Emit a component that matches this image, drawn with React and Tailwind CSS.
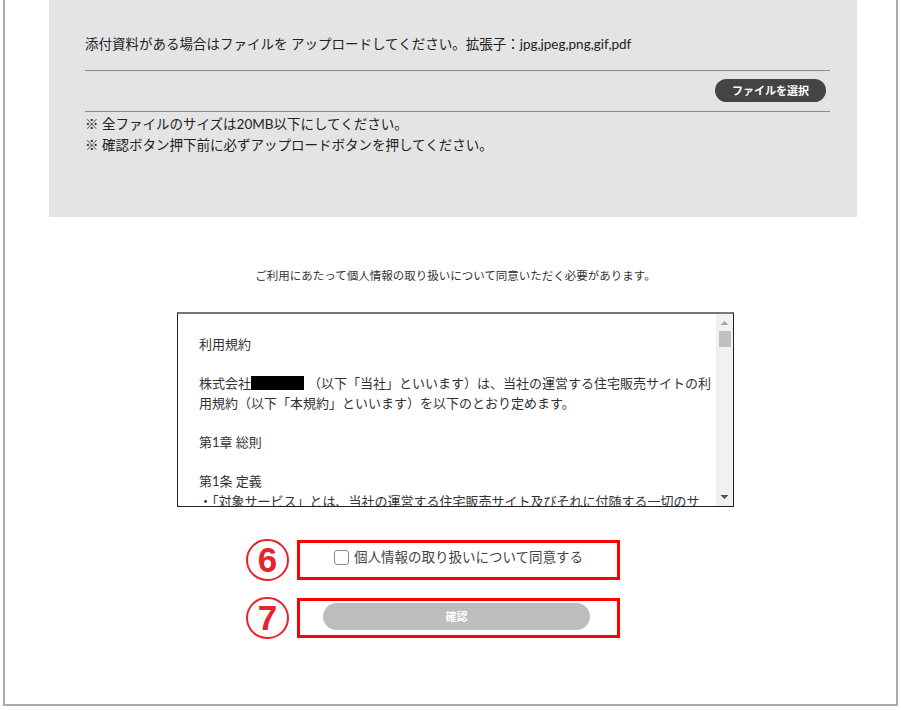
import React, { useState } from "react";

const FONT = { fontFamily: 'Lato, "Noto Sans CJK JP", sans-serif' };

const CircleNum = ({ n }) => (
  <div className="w-[43px] h-[42px] shrink-0 rounded-full border-2 border-[#e8232b] flex items-center justify-center">
    <span className="text-[#e8232b] text-[35px] leading-none font-bold font-['Liberation_Sans',Arial,sans-serif] -mt-[1px]">
      {n}
    </span>
  </div>
);

const FakeScrollbar = () => (
  <div className="w-[17px] shrink-0 bg-[#f1f1f1] flex flex-col items-center">
    <svg width="9" height="6" viewBox="0 0 9 6" className="mt-[6px]">
      <path d="M0.5 5 L4.5 1 L8.5 5 Z" fill="#a3a3a3" />
    </svg>
    <div className="mt-[5px] w-[12px] h-[16px] bg-[#c1c1c1]" />
    <div className="flex-1" />
    <svg width="9" height="6" viewBox="0 0 9 6" className="mb-[6px]">
      <path d="M0.5 1 L4.5 5 L8.5 1 Z" fill="#505050" />
    </svg>
  </div>
);

const TermsBox = () => (
  <div className="mt-[28px] h-[195px] flex border border-[#222] border-t-2 border-t-[#777] bg-white">
    <div className="flex-1 overflow-hidden pl-[21px] pt-[20px] text-[13px] leading-[20px] text-[#333] whitespace-nowrap">
      <p className="mb-[19px]">利用規約</p>
      <p className="mb-[19px]">
        <span className="block">
          株式会社
          <span className="inline-block w-[53px] h-[14px] bg-black align-[-2px]" />
          <span className="inline-block w-[4px]" />（以下「当社」といいます）は、当社の運営する住宅販売サイトの利
        </span>
        <span className="block">用規約（以下「本規約」といいます）を以下のとおり定めます。</span>
      </p>
      <p className="mb-[19px]">第1章 総則</p>
      <p>第1条 定義</p>
      <p>・「対象サービス」とは、当社の運営する住宅販売サイト及びそれに付随する一切のサ</p>
    </div>
    <FakeScrollbar />
  </div>
);

const App = () => {
  const [agreed, setAgreed] = useState(false);

  return (
    <div className="h-[710px] bg-white px-[3px] text-[#222]" style={FONT}>
      <div className="h-[706px] border-x-2 border-b-2 border-[#aaa]">
        {/* upload panel */}
        <div className="ml-[44px] mr-[39px] h-[217px] bg-[#e4e4e4] pl-[36px] pr-[27px] pt-[34px] text-[13.5px]">
          <p className="leading-[21px]">
            添付資料がある場合はファイルを アップロードしてください。拡張子：jpg,jpeg,png,gif,pdf
          </p>
          <div className="mt-[15px] border-t border-[#8c8c8c]" />
          <div className="flex justify-end pr-[4px] pt-[8px] pb-[9px]">
            <button className="h-[23px] px-[17px] rounded-full bg-[#444] text-white text-[11px] font-bold leading-none">
              ファイルを選択
            </button>
          </div>
          <div className="border-t border-[#8c8c8c]" />
          <div className="mt-[2px] leading-[21px]">
            <p>※ 全ファイルのサイズは20MB以下にしてください。</p>
            <p>※ 確認ボタン押下前に必ずアップロードボタンを押してください。</p>
          </div>
        </div>

        {/* agreement */}
        <div className="ml-[172px] w-[557px]">
          <p className="mt-[51px] text-center text-[11.5px] leading-[16px] text-[#333]">
            ご利用にあたって個人情報の取り扱いについて同意いただく必要があります。
          </p>

          <TermsBox />

          <div className="mt-[32px] ml-[69px] flex items-center gap-[8px]">
            <CircleNum n="6" />
            <div className="w-[323px] h-[40px] border-[3px] border-[#ff0000] flex items-center justify-center pb-[6px]">
              <label className="flex items-center gap-[5px] cursor-pointer">
                <span
                  onClick={() => setAgreed(!agreed)}
                  className="w-[15px] h-[15px] rounded-[3px] border border-[#8a8a8a] bg-white"
                />
                <span className="text-[13.5px] leading-[18px] text-[#444]">個人情報の取り扱いについて同意する</span>
              </label>
            </div>
          </div>

          <div className="mt-[16px] ml-[69px] flex items-center gap-[8px]">
            <CircleNum n="7" />
            <div className="w-[323px] h-[40px] border-[3px] border-[#ff0000] pl-[23px] pt-[2px]">
              <button
                disabled={!agreed}
                className="w-[267px] h-[27px] rounded-full bg-[#bdbdbd] text-white text-[11px] font-bold leading-none"
              >
                確認
              </button>
            </div>
          </div>
        </div>
      </div>
    </div>
  );
};

export default App;
